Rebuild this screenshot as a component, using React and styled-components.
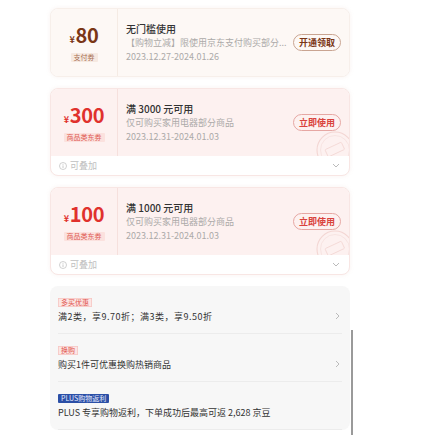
import React from "react";
import styled, { createGlobalStyle, css } from "styled-components";

const GlobalStyle = createGlobalStyle`
    html, body {
        margin: 0;
        padding: 0;
        background: #fff;
        font-family: "Noto Sans CJK SC", "Noto Sans", sans-serif;
    }
`;

const coupons = [
    {
        tone: "gold",
        amount: "80",
        tag: "支付券",
        title: "无门槛使用",
        desc: "【购物立减】限使用京东支付购买部分...",
        date: "2023.12.27-2024.01.26",
        action: "开通领取",
    },
    {
        tone: "red",
        amount: "300",
        tag: "商品类东券",
        title: "满 3000 元可用",
        desc: "仅可购买家用电器部分商品",
        date: "2023.12.31-2024.01.03",
        action: "立即使用",
        stack: true,
    },
    {
        tone: "red",
        amount: "100",
        tag: "商品类东券",
        title: "满 1000 元可用",
        desc: "仅可购买家用电器部分商品",
        date: "2023.12.31-2024.01.03",
        action: "立即使用",
        stack: true,
    },
];

const promos = [
    { kind: "red", tag: "多买优惠", text: "满2类，享9.70折；满3类，享9.50折", arrow: true, loose: true },
    { kind: "red", tag: "换购", text: "购买1件可优惠换购热销商品", arrow: true },
    { kind: "plus", tag: "PLUS购物返利", text: "PLUS 专享购物返利，下单成功后最高可返 2,628 京豆" },
];

const ChevronRight = () => (
    <svg width="5" height="8" viewBox="0 0 5 8">
        <polyline points="1,1 4,4 1,7" fill="none" stroke="#bbb" strokeWidth="1" />
    </svg>
);

const ChevronDown = () => (
    <svg width="8" height="5" viewBox="0 0 8 5">
        <polyline points="1,1 4,4 7,1" fill="none" stroke="#bbb" strokeWidth="1" />
    </svg>
);

const InfoIcon = () => (
    <svg width="8" height="8" viewBox="0 0 8 8">
        <circle cx="4" cy="4" r="3.5" fill="none" stroke="#c4c4c4" strokeWidth="0.8" />
        <line x1="4" y1="3.4" x2="4" y2="6" stroke="#c4c4c4" strokeWidth="0.9" />
        <circle cx="4" cy="2.3" r="0.5" fill="#c4c4c4" />
    </svg>
);

const Stamp = () => (
    <StampMark width="40" height="40" viewBox="0 0 40 40">
        <circle cx="20" cy="20" r="18" fill="none" stroke="#f3d6d3" strokeWidth="1.1" />
        <circle cx="20" cy="20" r="14.5" fill="none" stroke="#f5dedb" strokeWidth="0.7" />
        <rect x="11" y="15.5" width="18" height="8" rx="1" fill="none" stroke="#f3d6d3" strokeWidth="0.8" transform="rotate(-25 20 20)" />
    </StampMark>
);

const CouponCard = ({ coupon }) => (
    <Card $tone={coupon.tone}>
        <Main $tone={coupon.tone}>
            <Face $tone={coupon.tone}>
                <Amount $tone={coupon.tone}>
                    <small>¥</small>
                    {coupon.amount}
                </Amount>
                <FaceTag $tone={coupon.tone}>{coupon.tag}</FaceTag>
            </Face>
            <Info>
                <Title>{coupon.title}</Title>
                <Line>{coupon.desc}</Line>
                <Line>{coupon.date}</Line>
            </Info>
            <ActionPill $tone={coupon.tone}>{coupon.action}</ActionPill>
            {coupon.stack && <Stamp />}
        </Main>
        {coupon.stack && (
            <Footer>
                <InfoIcon />
                <span>可叠加</span>
                <FooterChevron>
                    <ChevronDown />
                </FooterChevron>
            </Footer>
        )}
    </Card>
);

export default function App() {
    return (
        <>
            <GlobalStyle />
            <Page>
                <List>
                    {coupons.map((c, i) => (
                        <CouponCard key={i} coupon={c} />
                    ))}
                    <PromoCard>
                        {promos.map((p, i) => (
                            <PromoRow key={i}>
                                <div>
                                    <PromoTag $kind={p.kind}>{p.tag}</PromoTag>
                                    <PromoText $loose={p.loose}>{p.text}</PromoText>
                                </div>
                                {p.arrow && <ChevronRight />}
                            </PromoRow>
                        ))}
                    </PromoCard>
                </List>
                <ScrollThumb />
            </Page>
        </>
    );
}

const Page = styled.div`
    position: relative;
    width: 437px;
    height: 435px;
    overflow: hidden;
    padding: 8px 0 0 50px;
    box-sizing: border-box;
`;

const List = styled.div`
    width: 300px;
    display: flex;
    flex-direction: column;
    gap: 11px;
`;

const Card = styled.div`
    border-radius: 8px;
    overflow: hidden;
    background: #fff;
    border: 1px solid ${(p) => (p.$tone === "gold" ? "#f7efea" : "#f8e6e4")};
    box-shadow: 0 0 4px rgba(210, 160, 150, 0.14);
    box-sizing: border-box;
`;

const Main = styled.div`
    position: relative;
    height: 67px;
    display: flex;
    align-items: center;
    overflow: hidden;
    background: ${(p) => (p.$tone === "gold" ? "#fdf8f5" : "#fdf1f0")};
`;

const Face = styled.div`
    width: 66px;
    height: 100%;
    flex-shrink: 0;
    display: flex;
    flex-direction: column;
    align-items: center;
    justify-content: center;
    gap: 2px;
    border-right: 1px solid ${(p) => (p.$tone === "gold" ? "#f5ebe4" : "#f6e0dd")};
`;

const Amount = styled.div`
    font-size: 20px;
    font-weight: 600;
    line-height: 22px;
    letter-spacing: -0.3px;
    color: ${(p) => (p.$tone === "gold" ? "#7a3616" : "#e0312d")};
    & > small {
        font-size: 9px;
        font-weight: 600;
        margin-right: 1px;
    }
`;

const FaceTag = styled.span`
    font-size: 7px;
    line-height: 9px;
    padding: 0 3px;
    border-radius: 1px;
    ${(p) =>
        p.$tone === "gold"
            ? css`
                  color: #a86f52;
                  background: #f6e9e1;
              `
            : css`
                  color: #e05a52;
                  background: #fbe1de;
              `}
`;

const Info = styled.div`
    flex: 1;
    min-width: 0;
    padding: 0 8px;
    display: flex;
    flex-direction: column;
`;

const Title = styled.div`
    font-size: 10px;
    line-height: 14px;
    font-weight: 500;
    color: #333;
`;

const Line = styled.div`
    font-size: 9px;
    line-height: 14px;
    color: #acaaa9;
    white-space: nowrap;
`;

const ActionPill = styled.span`
    flex-shrink: 0;
    margin-right: 8px;
    height: 17px;
    box-sizing: border-box;
    display: inline-flex;
    align-items: center;
    padding: 0 5px;
    border-radius: 9px;
    font-size: 9px;
    font-weight: 700;
    white-space: nowrap;
    ${(p) =>
        p.$tone === "gold"
            ? css`
                  color: #7a3616;
                  border: 1px solid #c9a491;
              `
            : css`
                  color: #d9423c;
                  border: 1px solid #e6a7a3;
              `}
`;

const StampMark = styled.svg`
    position: absolute;
    right: -6px;
    bottom: -14px;
`;

const Footer = styled.div`
    height: 19px;
    display: flex;
    align-items: center;
    gap: 3px;
    padding: 0 8px;
    font-size: 9px;
    color: #c0c0c0;
`;

const FooterChevron = styled.span`
    margin-left: auto;
    display: flex;
    padding-right: 1px;
`;

const PromoCard = styled.div`
    border-radius: 8px;
    background: #f7f7f7;
    padding: 0 8px;
`;

const PromoRow = styled.div`
    height: 48px;
    box-sizing: border-box;
    padding: 12px 2px 0 0;
    border-bottom: 1px solid #ececec;
    display: flex;
    justify-content: space-between;
    align-items: center;
    & > div {
        align-self: flex-start;
        display: flex;
        flex-direction: column;
        align-items: flex-start;
        gap: 3px;
    }
`;

const PromoTag = styled.span`
    font-size: 7px;
    line-height: 9px;
    padding: 0 3px;
    border-radius: 1px;
    ${(p) =>
        p.$kind === "plus"
            ? css`
                  color: #e6ecff;
                  background: #2b4fa6;
              `
            : css`
                  color: #e0524c;
                  background: #fce6e4;
                  box-shadow: inset 0 0 0 0.5px #f3b4b0;
              `}
`;

const PromoText = styled.span`
    font-size: 9px;
    line-height: 13px;
    color: #333;
    white-space: nowrap;
    letter-spacing: ${(p) => (p.$loose ? "0.5px" : "0")};
`;

const ScrollThumb = styled.div`
    position: absolute;
    left: 351px;
    top: 330px;
    width: 2px;
    height: 105px;
    background: #9a9a9a;
`;
